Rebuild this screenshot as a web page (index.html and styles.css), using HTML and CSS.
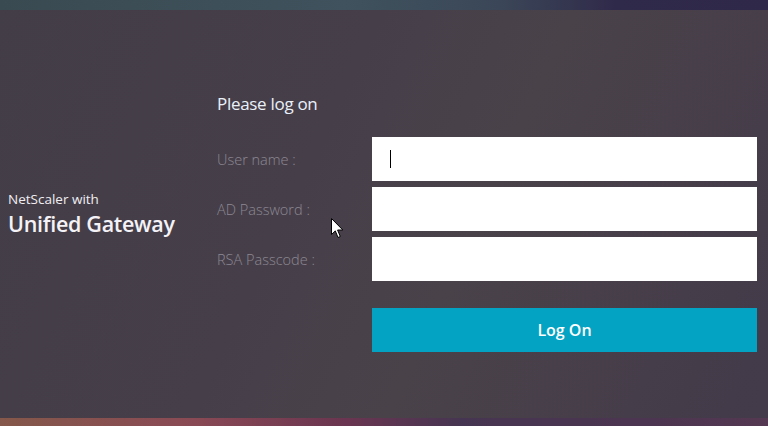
FILE: index.html
```html
<!DOCTYPE html>
<html lang="en">
<head>
    <meta charset="UTF-8">
    <meta name="viewport" content="width=device-width, initial-scale=1.0">
    <title>NetScaler Gateway</title>
    <link rel="stylesheet" href="styles.css">
</head>
<body>
    <div class="top-band"></div>

    <main class="logon">
        <div class="brand">
            <div class="brand-small">NetScaler with</div>
            <div class="brand-big">Unified Gateway</div>
        </div>

        <form class="logon-form">
            <h1>Please log on</h1>
            <div class="field">
                <label for="login">User name :</label>
                <div class="input-wrap">
                    <input type="text" id="login">
                    <span class="caret"></span>
                </div>
            </div>
            <div class="field">
                <label for="passwd">AD Password :</label>
                <div class="input-wrap">
                    <input type="password" id="passwd">
                    <!-- mouse pointer hovering near the fields -->
                    <svg class="pointer" width="13" height="21" viewBox="0 0 13 21">
                        <path d="M0.5 0.5 L0.5 16.5 L4.3 12.9 L7 19.5 L9.3 18.5 L6.6 12 L11.8 12 Z" fill="#fff" stroke="#000" stroke-width="1"/>
                    </svg>
                </div>
            </div>
            <div class="field">
                <label for="passwd1">RSA Passcode :</label>
                <div class="input-wrap">
                    <input type="password" id="passwd1">
                </div>
            </div>
            <div class="actions">
                <button type="button" class="btn">Log On</button>
            </div>
        </form>
    </main>

    <div class="bottom-band"></div>
</body>
</html>
```

FILE: styles.css
```css
html, body {
    height: 100%;
}
body {
    margin: 0;
    font-family: 'Open Sans', 'Noto Sans', sans-serif;
    color: #e6e4ea;
    background: linear-gradient(115deg, #433d47 0%, #463f4a 40%, #4a4249 60%, #433a4a 100%);
    display: flex;
    flex-direction: column;
    overflow: hidden;
}
.top-band {
    height: 10px;
    background: linear-gradient(90deg, #3a4a51 0%, #3f525d 45%, #3b4758 65%, #302a4a 80%, #2f2848 100%);
}
.bottom-band {
    height: 8px;
    margin-top: auto;
    background: linear-gradient(90deg, #84584a 0%, #8a4a55 25%, #6a3550 45%, #463552 60%, #4c3550 85%, #553852 100%);
}
.logon {
    display: flex;
    padding: 0 11px 0 8px;
}
.brand {
    width: 209px;
    margin-top: 180px;
}
.brand-small {
    font-size: 13.5px;
    line-height: 19px;
    color: #f0eef2;
}
.brand-big {
    font-size: 21.5px;
    font-weight: 600;
    line-height: 29px;
    letter-spacing: -0.3px;
    color: #f4f2f6;
}
.logon-form {
    flex: 1;
    padding-top: 82px;
}
.logon-form h1 {
    margin: 0 0 21px;
    font-size: 17px;
    font-weight: 400;
    line-height: 24px;
    color: #eaf0f8;
    letter-spacing: -0.3px;
}
.field {
    display: flex;
    align-items: center;
    margin-bottom: 6px;
}
.field label {
    width: 155px;
    font-size: 14.5px;
    font-weight: 300;
    color: #8d8892;
    margin-top: 1px;
}
.input-wrap {
    position: relative;
    flex: 1;
}
.input-wrap input {
    display: block;
    box-sizing: border-box;
    width: 100%;
    height: 44px;
    border: none;
    outline: none;
    padding: 0 18px;
    background: #fff;
    font-family: inherit;
    font-size: 15px;
}
.caret {
    position: absolute;
    left: 18px;
    top: 13px;
    width: 1px;
    height: 18px;
    background: #000;
}
.pointer {
    position: absolute;
    left: -41px;
    top: 31px;
}
.actions {
    margin: 27px 0 0 155px;
}
.btn {
    display: block;
    width: 100%;
    height: 44px;
    border: none;
    background-color: #03a3c3;
    color: #fff;
    font-family: inherit;
    font-size: 16px;
    font-weight: 600;
    cursor: pointer;
}
```
